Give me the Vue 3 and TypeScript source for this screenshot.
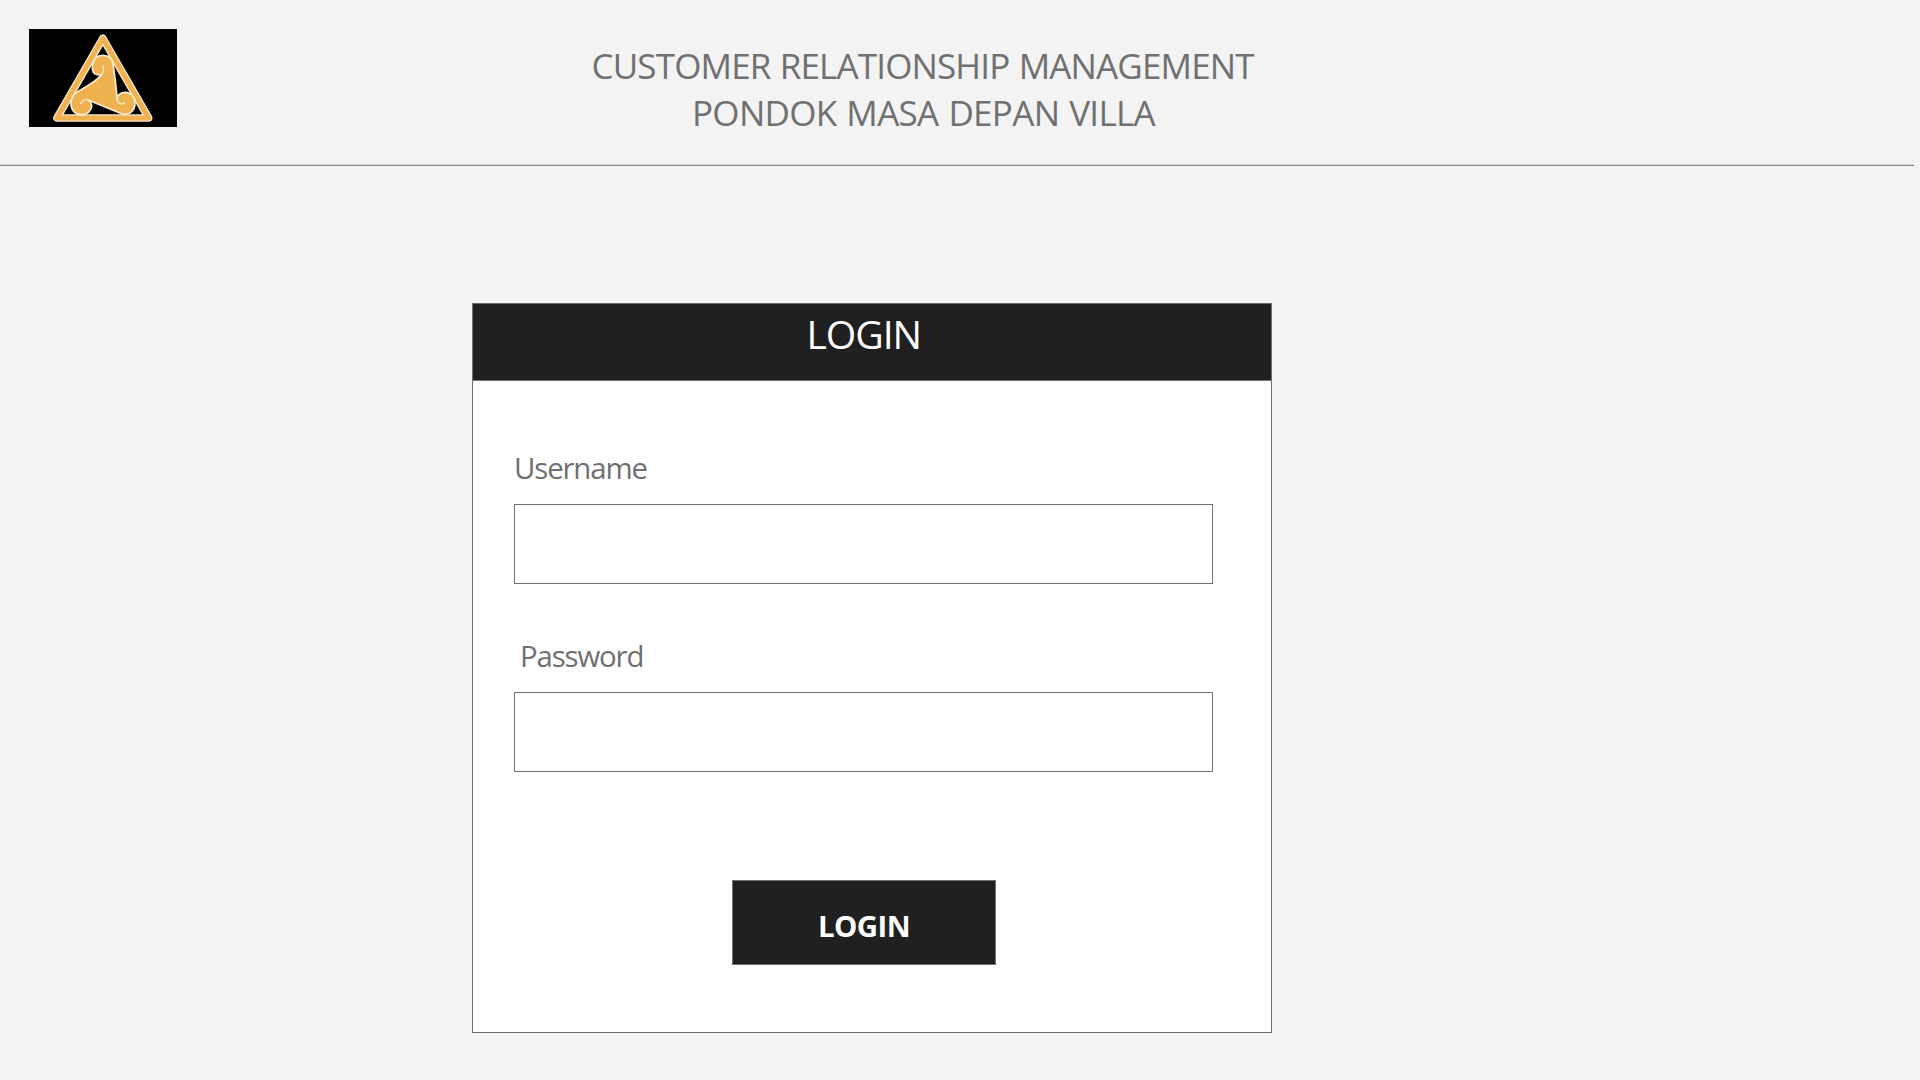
<script setup lang="ts">
import { ref } from 'vue'

const username = ref('')
const password = ref('')
</script>

<template>
  <div class="page">
    <header class="top">
      <svg class="logo" viewBox="27 27 444 294" aria-hidden="true">
        <rect x="27" y="27" width="444" height="294" fill="#000" />
        <g stroke-linejoin="round" stroke-linecap="round">
          <path class="rim" d="M248.500 55 L111 294 H386 Z" />
          <path class="frame" d="M248.500 55 L111 294 H386 Z" />
          <path
            class="swirl"
            d="M246 162 C242 166 226 166 220 157 C216 150 216 143 217 136 C220 116 232 106 248 106 C266 106 278 116 280 136 C284 172 290 202 291 238 C290 226 302 217 316 217 C334 217 345 232 345 249 C345 270 332 283 314 283 C306 283 300 280 294 277 L206 241 C212 245 215 251 215 260 C213 275 200 284 184 284 C166 284 153 270 153 252 C153 238 158 227 168 218 C190 204 222 190 243 166 Z"
          />
          <path class="curl" d="M249 137 C253 149 250 158 243 165" />
          <path class="curl" d="M182 251 C187 239 196 236 208 242" />
          <path class="curl" d="M314 247 C307 256 294 252 291 238" />
        </g>
      </svg>
      <h1 class="title">
        <span class="line1">CUSTOMER RELATIONSHIP MANAGEMENT</span>
        <span class="line2">PONDOK MASA DEPAN VILLA</span>
      </h1>
    </header>

    <form class="card" @submit.prevent>
      <h2 class="card-head"><span>LOGIN</span></h2>
      <div class="body">
        <label class="label user" for="username">Username</label>
        <input id="username" v-model="username" class="field" type="text" />
        <label class="label pass" for="password">Password</label>
        <input id="password" v-model="password" class="field" type="password" />
        <button class="submit" type="submit"><span>LOGIN</span></button>
      </div>
    </form>
  </div>
</template>

<style>
body {
  margin: 0;
  background: #f3f3f3;
}
</style>

<style scoped>
.page {
  box-sizing: border-box;
  width: 1920px;
  height: 1080px;
  overflow: hidden;
  background: #f3f3f3;
  color: #707070;
  font-family: "Segoe UI", "Open Sans", sans-serif;
}
.page * {
  box-sizing: border-box;
}
.top {
  display: flex;
  align-items: flex-start;
  width: 1914px;
  height: 166px;
  padding: 29px 0 0 29px;
  border-bottom: 1px solid #858585;
  box-shadow: inset 0 -1px 0 #dadada;
}
.logo {
  display: block;
  width: 148px;
  height: 98px;
}
.rim,
.frame {
  fill: none;
}
.rim {
  stroke: #f8e7cc;
  stroke-width: 23;
}
.frame {
  stroke: #f0b24e;
  stroke-width: 15;
}
.swirl {
  fill: #f0b24e;
  stroke: #fbecd4;
  stroke-width: 5;
}
.curl {
  fill: none;
  stroke: #fbecd4;
  stroke-width: 4;
}
.title {
  display: flex;
  flex-direction: column;
  margin: 13px 0 0 414.500px;
  font-size: 35px;
  font-weight: 400;
  line-height: 47px;
  white-space: nowrap;
}
.line1 {
  letter-spacing: -0.85px;
  word-spacing: 1px;
}
.line2 {
  margin-left: 100.500px;
  letter-spacing: -0.7px;
  word-spacing: 1.5px;
}
.card {
  width: 800px;
  height: 730px;
  margin: 137px 0 0 472px;
  border: 1px solid #707070;
  background: #fff;
}
.card-head {
  height: 77px;
  margin: 0;
  padding: 3px 0 0 333.500px;
  border-bottom: 1px solid #707070;
  background: #202020;
  color: #fff;
  font-size: 39.2px;
  font-weight: 400;
  line-height: 54px;
  letter-spacing: -1.1px;
}
.body {
  display: flex;
  flex-direction: column;
  padding: 67px 58px 0 41px;
}
.label {
  height: 56px;
  font-size: 29.4px;
  line-height: 40px;
}
.user {
  letter-spacing: -1.15px;
}
.pass {
  margin-top: 52px;
  padding-left: 6px;
  letter-spacing: -1.15px;
}
.field {
  width: 699px;
  height: 80px;
  padding: 0 16px;
  border: 1px solid #707070;
  border-radius: 0;
  outline: none;
  background: #fff;
  font: inherit;
  font-size: 29px;
}
.submit {
  width: 264px;
  height: 85px;
  margin: 108px 0 0 218px;
  padding: 6px 0 0;
  border: 1px solid #707070;
  border-radius: 0;
  background: #202020;
  color: #fff;
  font: inherit;
  font-size: 29.4px;
  font-weight: 700;
  line-height: 40px;
  letter-spacing: -0.6px;
}
</style>
